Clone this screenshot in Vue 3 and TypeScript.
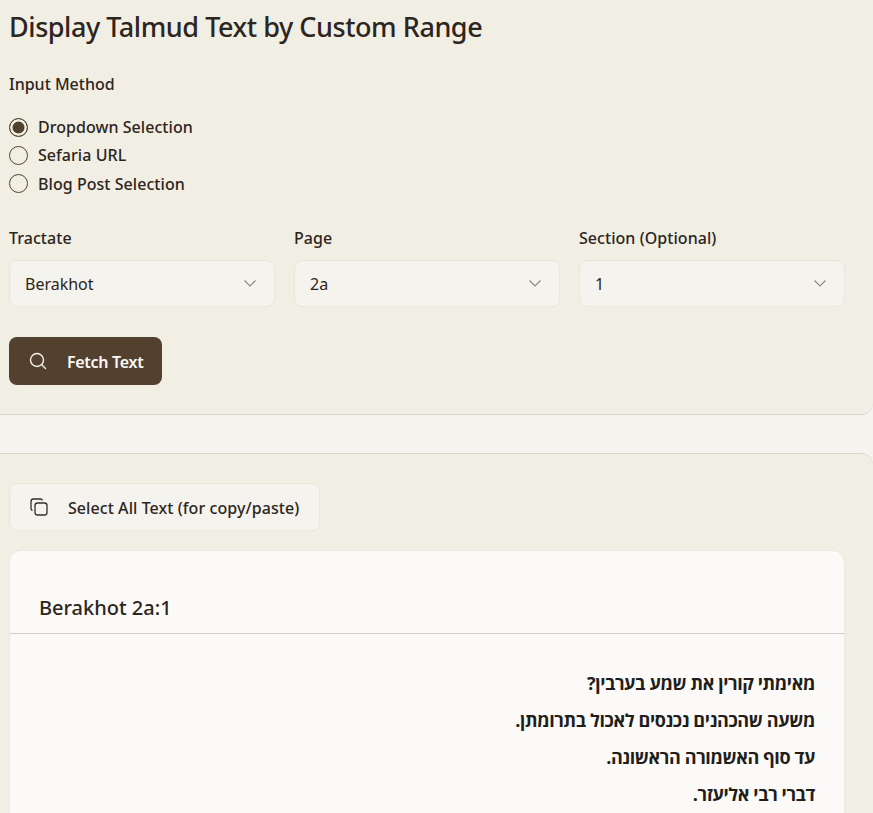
<script setup lang="ts">
const methods = [
  { label: 'Dropdown Selection', checked: true },
  { label: 'Sefaria URL', checked: false },
  { label: 'Blog Post Selection', checked: false },
]
const selects = [
  { label: 'Tractate', value: 'Berakhot' },
  { label: 'Page', value: '2a' },
  { label: 'Section (Optional)', value: '1' },
]
const lines = ['מאימתי קורין את שמע בערבין?', 'משעה שהכהנים נכנסים לאכול בתרומתן.', 'עד סוף האשמורה הראשונה.', 'דברי רבי אליעזר.']
</script>

<template>
  <div class="page">
    <section class="panel top">
      <h1>Display Talmud Text by Custom Range</h1>
      <div class="group-label">Input Method</div>
      <div class="radios">
        <div v-for="m in methods" :key="m.label" class="radio-row">
          <span class="radio" :class="{ on: m.checked }"></span>
          <span>{{ m.label }}</span>
        </div>
      </div>
      <div class="selects">
        <div v-for="s in selects" :key="s.label" class="field">
          <div class="field-label">{{ s.label }}</div>
          <div class="select">
            <span class="value">{{ s.value }}</span>
            <svg width="16" height="16" viewBox="0 0 16 16" fill="none" stroke="#8d8a85" stroke-width="1.2"><path d="M2.5 5.5 8 11l5.5-5.5" /></svg>
          </div>
        </div>
      </div>
      <button class="fetch">
        <svg width="20" height="20" viewBox="0 0 20 20" fill="none" stroke="#f5f3ee" stroke-width="1.4"><circle cx="9" cy="9" r="6.5" /><path d="m14 14 3.5 3.5" stroke-linecap="round" /></svg>
        <span class="label">Fetch Text</span>
      </button>
    </section>
    <section class="panel bottom">
      <button class="copy">
        <svg width="20" height="20" viewBox="0 0 20 20" fill="none" stroke="#33302c" stroke-width="1.3"><rect x="6" y="6" width="12" height="12" rx="2.5" /><path d="M3.5 13.5A2 2 0 0 1 2 11.6V4.5A2.5 2.5 0 0 1 4.5 2h7a2 2 0 0 1 1.9 1.5" /></svg>
        <span class="label">Select All Text (for copy/paste)</span>
      </button>
      <div class="card">
        <h2>Berakhot 2a:1</h2>
        <div class="hebrew" dir="rtl">
          <p v-for="l in lines" :key="l">{{ l }}</p>
        </div>
      </div>
    </section>
  </div>
</template>

<style>
html, body { margin: 0; background: #f5f3ee; }
</style>

<style scoped>
.page {
  height: 813px;
  overflow: hidden;
  font-family: "Noto Sans", "Open Sans", sans-serif;
  color: #2c2520;
  display: flex;
  flex-direction: column;
  gap: 38px;
}
.panel {
  background: #f1eee4;
  border: 0 solid #d8d5cb;
  box-sizing: border-box;
  padding: 0 28px 0 9px;
}
.top {
  border-bottom-width: 1px;
  border-bottom-right-radius: 12px;
  height: 415px;
  flex: none;
}
.bottom {
  border-top-width: 1px;
  border-top-right-radius: 12px;
  flex: 1;
  padding-top: 29px;
}
h1 {
  margin: 0;
  padding-top: 8px;
  font-size: 27px;
  line-height: 38px;
  font-weight: 500;
  letter-spacing: -0.45px;
  color: #2c2520;
}
.group-label {
  margin-top: 27px;
  font-size: 16px;
  line-height: 22px;
  font-weight: 500;
}
.radios {
  margin-top: 21px;
  display: flex;
  flex-direction: column;
  gap: 6.4px;
}
.radio-row {
  display: flex;
  align-items: center;
  gap: 10px;
  height: 22px;
  font-size: 16px;
  font-weight: 500;
  letter-spacing: 0.05px;
}
.radio {
  width: 19px;
  height: 19px;
  box-sizing: border-box;
  border: 1px solid #53412f;
  border-radius: 50%;
  flex: none;
  background: transparent;
}
.radio.on {
  background: #53412f;
  box-shadow: inset 0 0 0 2.5px #f1eee4;
}
.selects {
  margin-top: 32.2px;
  display: grid;
  grid-template-columns: repeat(3, 265.5px);
  gap: 19.5px;
}
.field-label {
  font-size: 16px;
  line-height: 22px;
  font-weight: 500;
  letter-spacing: 0.05px;
}
.select {
  margin-top: 11px;
  height: 47px;
  box-sizing: border-box;
  background: #f5f3ee;
  border: 1px solid #e9e6de;
  border-radius: 8px;
  padding: 0 16px 0 15px;
  display: flex;
  align-items: center;
  justify-content: space-between;
  font-size: 16px;
}
.value {
  padding-top: 2px;
}
.fetch {
  margin-top: 30px;
  height: 48px;
  width: 153px;
  border: 0;
  border-radius: 8px;
  background: #534130;
  color: #fbfaf7;
  font: inherit;
  font-size: 16px;
  font-weight: 600;
  letter-spacing: -0.3px;
  display: flex;
  align-items: center;
  padding: 0 0 0 19px;
  gap: 19px;
}
.label {
  padding-top: 2px;
}
.copy {
  height: 48px;
  width: 311px;
  box-sizing: border-box;
  background: #f5f3ee;
  border: 1px solid #e9e6de;
  border-radius: 8px;
  color: #2c2520;
  font: inherit;
  font-size: 16px;
  font-weight: 500;
  letter-spacing: 0.07px;
  display: flex;
  align-items: center;
  padding: 0 0 0 19px;
  gap: 19px;
}
.card {
  margin-top: 19px;
  background: #fbfaf8;
  border: 1px solid #ebe8e0;
  border-radius: 12px;
  box-sizing: border-box;
  width: 836px;
  height: 400px;
}
h2 {
  margin: 0;
  padding: 41px 29px 0;
  height: 83px;
  box-sizing: border-box;
  border-bottom: 1px solid #d2cdc5;
  font-size: 20px;
  line-height: 32px;
  font-weight: 500;
}
.hebrew {
  padding: 31px 29px 0;
  font-family: "Open Sans", "Liberation Sans", sans-serif;
  font-size: 18px;
  font-weight: 700;
  letter-spacing: -0.38px;
  color: #221d19;
}
.hebrew p {
  margin: 0;
  height: 37px;
  line-height: 37px;
}
</style>
